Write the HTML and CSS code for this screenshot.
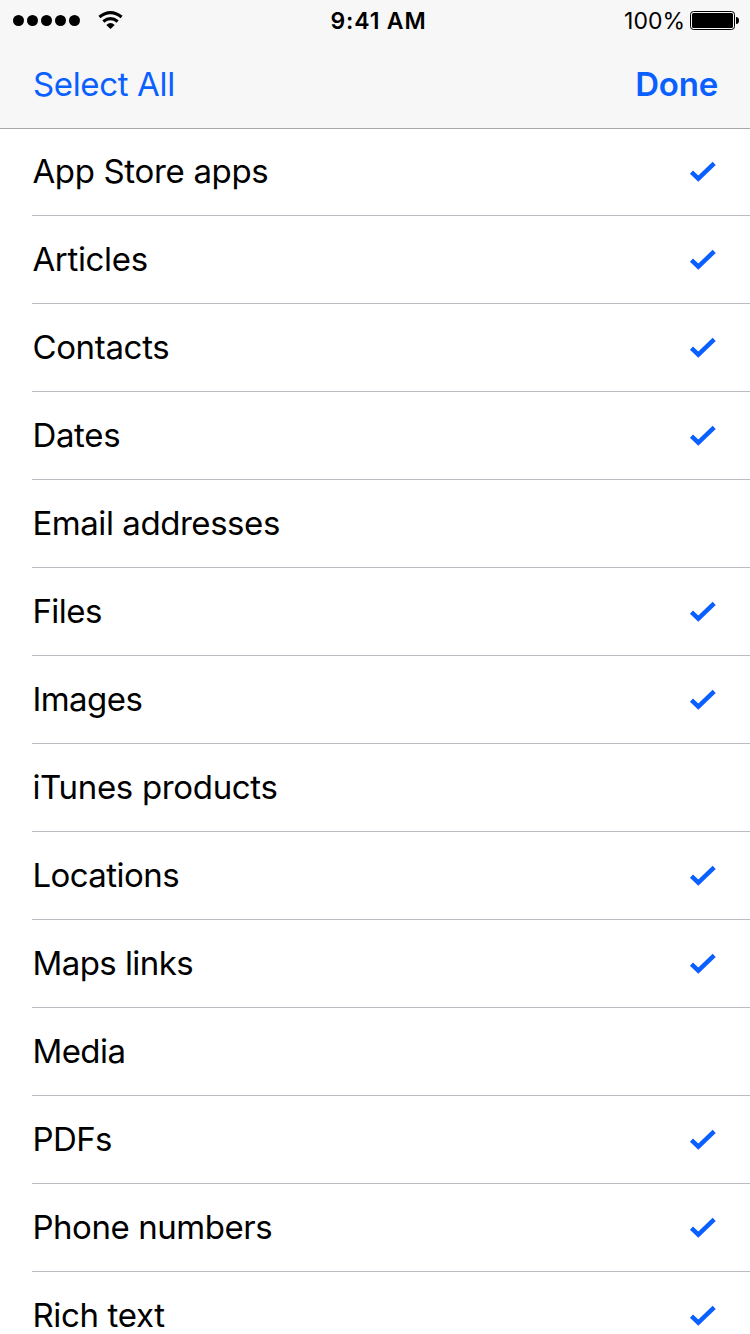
FILE: index.html
```html
<!DOCTYPE html>
<html lang="en">
<head>
<meta charset="utf-8">
<title>Select Types</title>
<link rel="stylesheet" href="styles.css">
</head>
<body>
<svg class="defs"><symbol id="check" viewBox="0 0 28 22"><path d="M3.5 12.2 10.3 18.7 26.2 3.4" fill="none" stroke="currentColor" stroke-width="4.5"/></symbol></svg>
<header class="header">
<div class="status">
<div class="signal"><i></i><i></i><i></i><i></i><i></i>
<svg class="wifi" viewBox="0 0 26 19"><path class="arc" d="M1.400 5.900Q12.500-2.700 23.600 5.900M5.300 10.500Q12.500 4.900 19.700 10.500"/><path d="M8.300 13.900Q12.500 10.200 16.700 13.900L12.500 18.100Z"/></svg></div>
<div class="time">9:41 AM</div>
<div class="power"><span class="percent">100%</span><svg class="battery" viewBox="0 0 49 19"><rect x=".5" y=".5" width="44" height="18" rx="3" fill="none" stroke="#000"/><rect x="2" y="2" width="41" height="15" rx="1.5"/><path d="M46 6Q49 6 49 9.500T46 13Z"/></svg></div>
</div>
<nav class="nav"><span class="select">Select All</span><span class="done">Done</span></nav>
</header>
<main class="list">
<div class="row"><span class="label">App Store apps</span><svg class="check"><use href="#check"/></svg></div>
<div class="row"><span class="label">Articles</span><svg class="check"><use href="#check"/></svg></div>
<div class="row"><span class="label">Contacts</span><svg class="check"><use href="#check"/></svg></div>
<div class="row"><span class="label">Dates</span><svg class="check"><use href="#check"/></svg></div>
<div class="row"><span class="label medium">Email addresses</span></div>
<div class="row"><span class="label tight">Files</span><svg class="check"><use href="#check"/></svg></div>
<div class="row"><span class="label tight">Images</span><svg class="check"><use href="#check"/></svg></div>
<div class="row"><span class="label">iTunes products</span></div>
<div class="row"><span class="label tight">Locations</span><svg class="check"><use href="#check"/></svg></div>
<div class="row"><span class="label tight">Maps links</span><svg class="check"><use href="#check"/></svg></div>
<div class="row"><span class="label tight">Media</span></div>
<div class="row"><span class="label tight">PDFs</span><svg class="check"><use href="#check"/></svg></div>
<div class="row"><span class="label medium">Phone numbers</span><svg class="check"><use href="#check"/></svg></div>
<div class="row"><span class="label">Rich text</span><svg class="check"><use href="#check"/></svg></div>
</main>
</body>
</html>
```
FILE: styles.css
```css
* { box-sizing: border-box; }
body { margin: 0; height: 1334px; overflow: hidden; background: #fff; color: #000; font-family: Inter, sans-serif; }
.defs { display: none; }
.header { height: 129px; background: #f7f7f7; border-bottom: 1px solid #a7a7aa; }
.status { height: 40px; display: grid; grid-template-columns: 1fr auto 1fr; align-items: center; padding: 1px 11px 0 18px; }
.signal { display: flex; align-items: center; gap: 3px; margin-left: -5px; }
.signal i { width: 11px; height: 11px; border-radius: 50%; background: #000; }
.wifi { width: 26px; height: 19px; margin-left: 15px; }
.arc { fill: none; stroke: #000; stroke-width: 3.1; }
.time { padding-top: 1px; font-size: 23px; font-weight: 600; letter-spacing: .85px; }
.power { display: flex; justify-content: flex-end; align-items: center; gap: 5px; }
.percent { padding-top: 1px; font-size: 23px; }
.battery { width: 49px; height: 19px; }
.nav { height: 88px; display: flex; justify-content: space-between; align-items: center; padding: 0 32px 0 33px; color: #0a60ff; font-size: 33px; }
.select { letter-spacing: -.35px; }
.done { font-weight: 600; letter-spacing: -.2px; }
.row { height: 88px; margin-left: 32px; padding: 0 34px 1px .4px; display: flex; align-items: center; justify-content: space-between; border-bottom: 1px solid #bcbbc1; font-size: 33px; }
.row:first-child { height: 87px; padding-bottom: 2px; }
.label { letter-spacing: -.33px; }
.medium { letter-spacing: -.44px; }
.tight { letter-spacing: -.55px; }
.check { width: 28px; height: 22px; color: #0a60ff; }
```
